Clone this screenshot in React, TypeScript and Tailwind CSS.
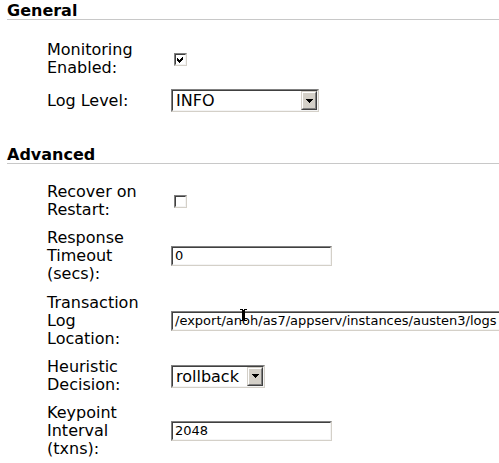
import type { ReactNode } from 'react'

// Classic (Win2k-style) config form: two titled sections of label/control rows.

function SectionHeader({ title, className = '' }: { title: string; className?: string }) {
  return (
    <div
      className={`ml-[7px] h-[20px] border-b border-[#c8c8c8] pt-[2px] text-[16px] font-bold leading-[17px] ${className}`}
    >
      {title}
    </div>
  )
}

function Row({ label, children, className = '' }: { label: ReactNode; children: ReactNode; className?: string }) {
  return (
    <div className={`ml-[47px] flex items-center ${className}`}>
      <div className="w-[124px] shrink-0 text-[16px] leading-[18px]">{label}</div>
      <div className="flex shrink-0 items-center">{children}</div>
    </div>
  )
}

function Sunken({ className = '', children }: { className?: string; children: ReactNode }) {
  return (
    <div
      className={`border border-t-[#808080] border-l-[#808080] border-r-[#d4d0c8] border-b-[#d4d0c8] ${className}`}
    >
      <div className="flex h-full w-full border border-t-[#404040] border-l-[#404040] border-r-[#f4f4f4] border-b-[#f4f4f4] bg-white">
        {children}
      </div>
    </div>
  )
}

function Checkbox({ checked }: { checked?: boolean }) {
  return (
    <Sunken className="ml-[3px] h-[13px] w-[13px]">
      {checked && (
        <svg width="9" height="9" viewBox="0 0 9 9" shapeRendering="crispEdges" className="block">
          <path d="M1 3h1v1h1v1h1v-1h1v-1h1v-1h1v3h-1v1h-1v1h-1v1h-1v-1h-1v-1h-1z" fill="#000" />
        </svg>
      )}
    </Sunken>
  )
}

function Select({ value, width }: { value: string; width: string }) {
  return (
    <Sunken className={`h-[23px] ${width}`}>
      <div className="flex-1 overflow-hidden pl-[3px] text-[16px] leading-[19px] whitespace-nowrap">{value}</div>
      <div className="h-[19px] w-[16px] border border-t-[#d4d0c8] border-l-[#d4d0c8] border-r-[#404040] border-b-[#404040]">
        <div className="flex h-full w-full items-center justify-center border border-t-white border-l-white border-r-[#808080] border-b-[#808080] bg-[#d4d0c8]">
          <svg width="7" height="4" viewBox="0 0 7 4" shapeRendering="crispEdges" className="block">
            <path d="M0 0h7v1h-1v1h-1v1h-1v1h-1v-1h-1v-1h-1v-1h-1z" fill="#000" />
          </svg>
        </div>
      </div>
    </Sunken>
  )
}

function TextInput({ value, width, children }: { value: string; width: string; children?: ReactNode }) {
  return (
    <div className="relative">
      <Sunken className={`h-[20px] ${width}`}>
        <div className="pl-[2px] text-[13px] leading-[16px] whitespace-nowrap">{value}</div>
      </Sunken>
      {children}
    </div>
  )
}

export default function App() {
  return (
    <div className="h-[463px] w-[499px] overflow-hidden bg-white font-['DejaVu_Sans',Verdana,sans-serif] text-black">
      <SectionHeader title="General" />

      <Row className="mt-[21px]" label={<>Monitoring<br />Enabled:</>}>
        <Checkbox checked />
      </Row>
      <Row className="mt-[12px]" label="Log Level:">
        <Select value="INFO" width="w-[148px]" />
      </Row>

      <SectionHeader title="Advanced" className="mt-[32px]" />

      <Row className="mt-[19px]" label={<>Recover on<br />Restart:</>}>
        <Checkbox />
      </Row>
      <Row className="mt-[10px]" label={<>Response<br />Timeout<br />(secs):</>}>
        <TextInput value="0" width="w-[161px]" />
      </Row>
      <Row className="mt-[11px]" label={<>Transaction<br />Log<br />Location:</>}>
        <TextInput value="/export/anoh/as7/appserv/instances/austen3/logs" width="w-[340px]">
          {/* mouse I-beam caught in the screenshot */}
          <svg
            width="7"
            height="12"
            viewBox="0 0 7 12"
            shapeRendering="crispEdges"
            className="absolute left-[69px] top-[-2px]"
          >
            <path d="M0 0h3v1h1v-1h3v1h-2v10h2v1h-3v-1h-1v1h-3v-1h2v-10h-2z" fill="#000" />
          </svg>
        </TextInput>
      </Row>
      <Row className="mt-[10px]" label={<>Heuristic<br />Decision:</>}>
        <Select value="rollback" width="w-[94px]" />
      </Row>
      <Row className="mt-[10px]" label={<>Keypoint<br />Interval<br />(txns):</>}>
        <TextInput value="2048" width="w-[161px]" />
      </Row>
    </div>
  )
}
